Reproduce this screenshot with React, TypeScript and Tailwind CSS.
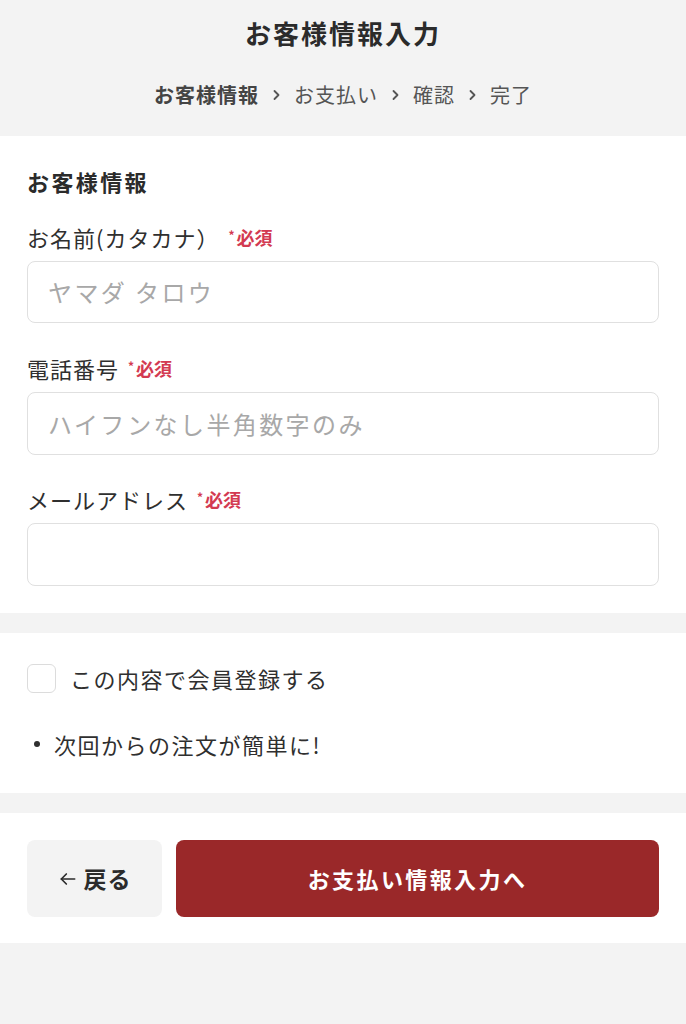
import React from "react";

const font = { fontFamily: '"Noto Sans CJK JP", "Noto Sans", sans-serif' };

function Chevron() {
  return (
    <svg width="9" height="12" viewBox="0 0 9 12" className="mx-[13px]" fill="none">
      <polyline points="2.5,2 6.5,6 2.5,10" stroke="#555" strokeWidth="1.8" strokeLinecap="round" strokeLinejoin="round" />
    </svg>
  );
}

function Label({ text, mt }: { text: string; mt: string }) {
  return (
    <div className={`flex items-center h-[28px] ${mt}`}>
      <span className="text-[22px] text-[#2f2f2f] tracking-[1px]">{text}</span>
      <span className="ml-[9px] text-[18px] font-bold text-[#d33a51] flex items-center">
        <span className="text-[12px] mr-[2px] -mt-[5px]">*</span>必須
      </span>
    </div>
  );
}

function Field({ placeholder, h }: { placeholder?: string; h: string }) {
  return (
    <div className={`mt-[10px] ${h} rounded-[8px] border border-[#e0e0e0] bg-white flex items-center px-[20px]`}>
      {placeholder && (
        <span className="text-[24px] tracking-[2.4px] text-[#a8a8a8]">{placeholder}</span>
      )}
    </div>
  );
}

export default function App() {
  return (
    <div className="min-h-screen bg-[#f3f3f3]" style={font}>
      <div className="h-[136px] flex flex-col items-center pt-[15px]">
        <div className="h-[36px] leading-[36px] text-[26px] font-bold text-[#2b2b2b] tracking-[2px]">お客様情報入力</div>
        <div className="mt-[30px] h-[28px] flex items-center text-[20px] text-[#555] tracking-[1px]">
          <span className="font-bold text-[#444]">お客様情報</span>
          <Chevron />
          <span>お支払い</span>
          <Chevron />
          <span>確認</span>
          <Chevron />
          <span>完了</span>
        </div>
      </div>

      <div className="bg-white px-[27px] pt-[29px] pb-[27px]">
        <div className="h-[32px] leading-[32px] text-[22px] font-bold text-[#2b2b2b] tracking-[2.4px]">お客様情報</div>
        <Label text="お名前(カタカナ）" mt="mt-[26px]" />
        <Field placeholder="ヤマダ タロウ" h="h-[62px]" />
        <Label text="電話番号" mt="mt-[31px]" />
        <Field placeholder="ハイフンなし半角数字のみ" h="h-[63px]" />
        <Label text="メールアドレス" mt="mt-[30px]" />
        <Field h="h-[63px]" />
      </div>

      <div className="mt-[20px] bg-white px-[27px] pt-[29px] pb-[33px]">
        <div className="h-[32px] flex items-center">
          <div className="w-[29px] h-[29px] rounded-[6px] border-[1.5px] border-[#dcdcdc] bg-white" />
          <span className="ml-[14px] text-[22px] tracking-[1.5px] text-[#2f2f2f]">この内容で会員登録する</span>
        </div>
        <div className="mt-[34px] h-[32px] flex items-center">
          <span className="ml-[7px] w-[6px] h-[6px] rounded-full bg-[#2f2f2f]" />
          <span className="ml-[14px] text-[22px] tracking-[1.5px] text-[#2f2f2f]">次回からの注文が簡単に!</span>
        </div>
      </div>

      <div className="mt-[20px] bg-white px-[27px] pt-[27px] pb-[26px] flex gap-[14px]">
        <div className="w-[135px] h-[77px] rounded-[8px] bg-[#f3f3f3] flex items-center justify-center text-[#2b2b2b]">
          <svg width="20" height="20" viewBox="0 0 24 24" fill="none" stroke="#2b2b2b" strokeWidth="2" strokeLinecap="round" strokeLinejoin="round">
            <path d="M20 12H4" />
            <path d="M10 18l-6-6 6-6" />
          </svg>
          <span className="ml-[6px] text-[23px] font-bold tracking-[1px]">戻る</span>
        </div>
        <div className="flex-1 h-[77px] rounded-[8px] bg-[#9a2829] flex items-center justify-center text-white text-[22px] font-bold tracking-[2.4px]">
          お支払い情報入力へ
        </div>
      </div>
    </div>
  );
}
